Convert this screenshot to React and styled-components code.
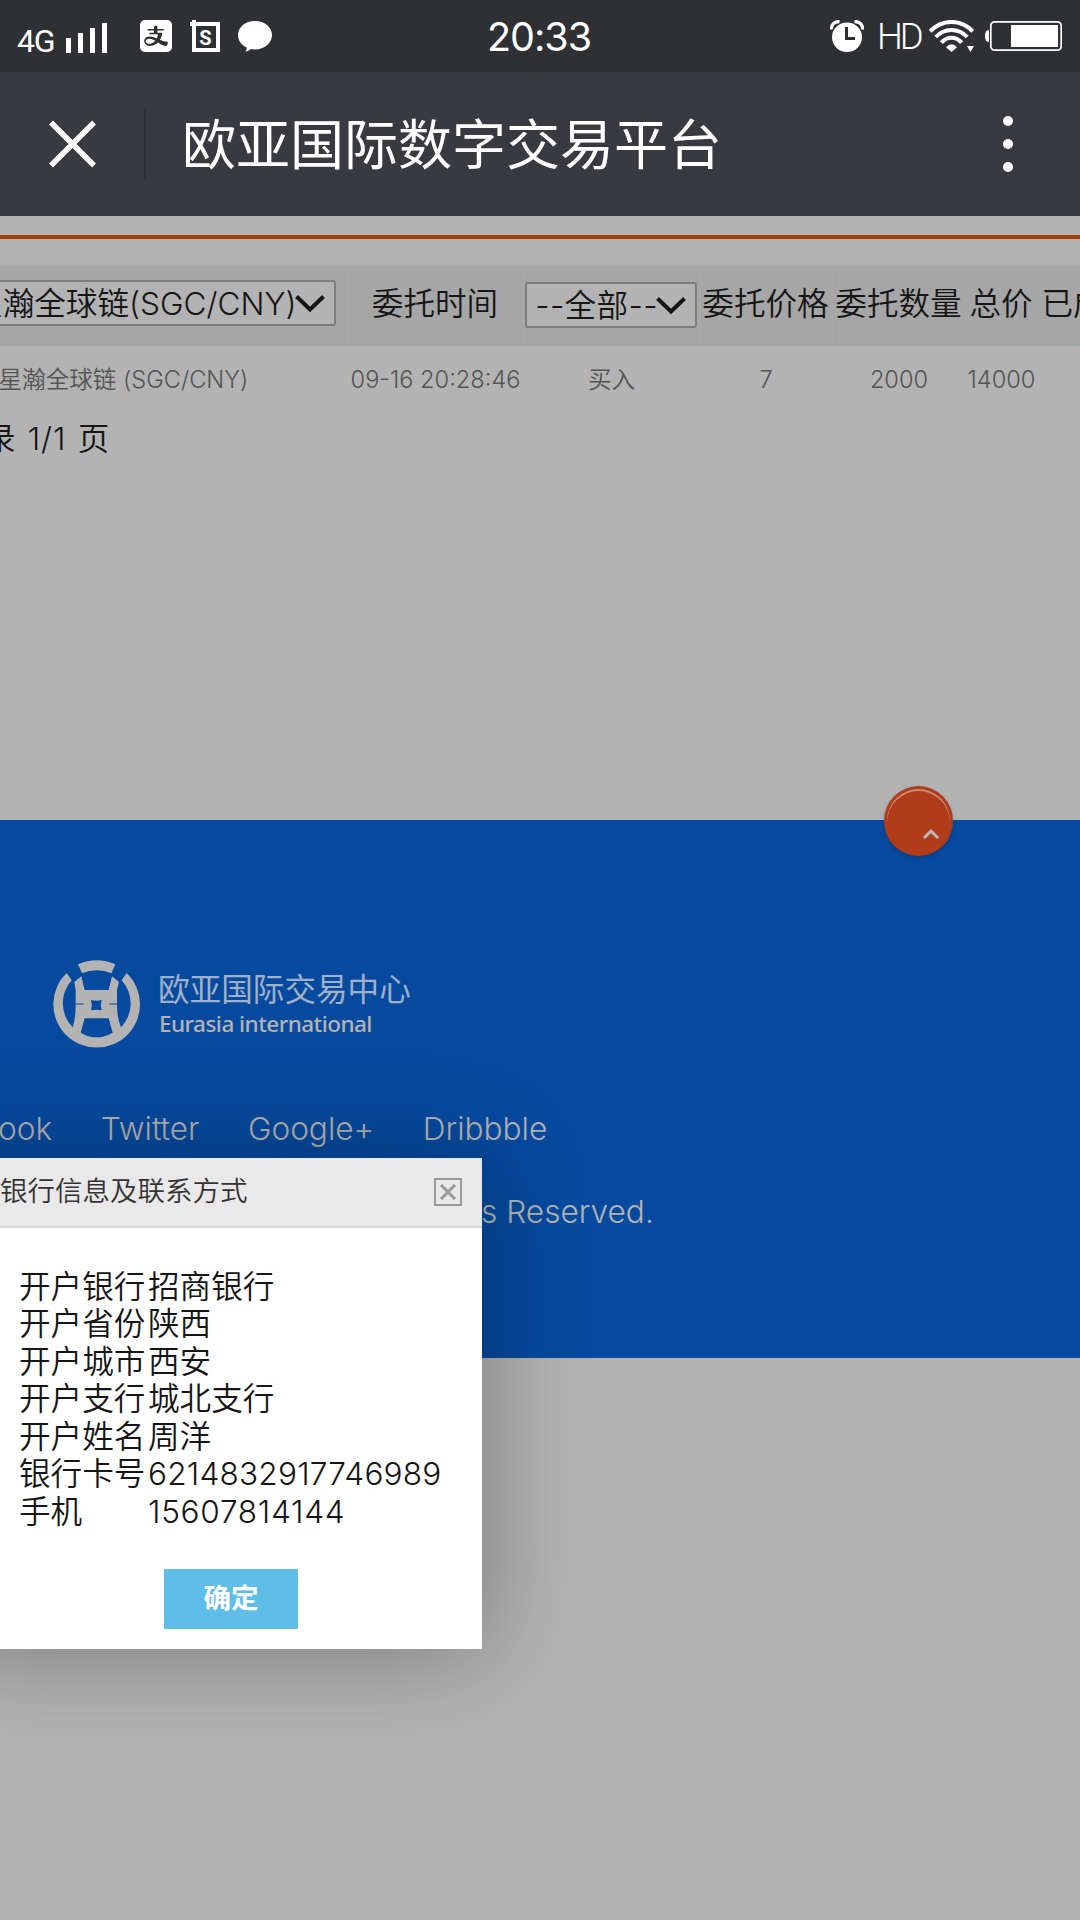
import React from "react";
import styled, { createGlobalStyle } from "styled-components";
import { AiFillAlipaySquare } from "react-icons/ai";

const GlobalStyle = createGlobalStyle`
  * { box-sizing: border-box; }
  html, body { margin: 0; padding: 0; background: #b3b3b3; }
  body {
    font-family: Inter, "Noto Sans CJK SC", sans-serif;
    font-weight: 350;
    color: #151515;
    overflow: hidden;
  }
`;

const Screen = styled.div`
  position: relative;
  width: 1080px;
  height: 1920px;
  overflow: hidden;
  background: #b3b3b3;
`;

const StatusBar = styled.div`
  display: grid;
  grid-template-columns: 1fr auto 1fr;
  height: 72px;
  padding: 0 18px;
  background: #2f3034;
  color: #fff;
`;

const StatusGroup = styled.div`
  display: flex;
  align-items: flex-start;
  justify-content: ${(p) => (p.$end ? "flex-end" : "flex-start")};
  padding-top: 20px;
`;

const Network = styled.span`
  width: 39px;
  margin: 2px 10px 0 -1px;
  font: 400 32px/38px Roboto, sans-serif;
  letter-spacing: -1.2px;
`;

const Signal = styled.div`
  display: flex;
  align-items: flex-end;
  gap: 7px;
  height: 33px;
  margin-right: 33px;
`;

const SignalBar = styled.i`
  width: 5px;
  height: ${(p) => p.$h}px;
  background: #fff;
`;

const NoticeIcons = styled.div`
  display: flex;
  gap: 18px;
`;

const PayBox = styled.div`
  display: flex;
  align-items: center;
  justify-content: center;
  width: 32px;
  height: 32px;
  border-radius: 5px;
  overflow: hidden;
  svg { flex: none; }
`;

const Clock = styled.div`
  padding: 18px 2px 0 0;
  font-weight: 400;
  font-size: 39.5px;
  line-height: 39px;
  letter-spacing: -1px;
  white-space: nowrap;
`;

const HD = styled.span`
  width: 46px;
  margin: -3px 6px 0 13px;
  font: 300 36.5px/40px Roboto, sans-serif;
  letter-spacing: -3px;
`;

const NavBar = styled.div`
  display: flex;
  align-items: center;
  height: 144px;
  padding: 0 67px 0 49px;
  background: #393a3f;
  color: #fff;
`;

const NavDivider = styled.i`
  width: 2px;
  height: 72px;
  margin: 0 36px 0 48px;
  background: #2e2f33;
`;

const NavTitle = styled.h1`
  flex: 1;
  margin: 0;
  padding-top: 4px;
  font-size: 54px;
  font-weight: 400;
  line-height: 72px;
`;

const Dots = styled.div`
  display: flex;
  flex-direction: column;
  gap: 13px;
`;

const Dot = styled.i`
  width: 10px;
  height: 10px;
  border-radius: 50%;
  background: #fff;
`;

const Rule = styled.div`
  height: 4px;
  margin: 19px 0 25px;
  background: #a33f00;
`;

const Row = styled.div`
  display: grid;
  grid-template-columns: 387px 176px 176px 133px 133px 72px 200px;
  width: 1277px;
  margin-left: -39.5px;
`;

const HeadRow = styled(Row)`
  height: 82px;
  background: #a6a6a6;
  border-top: 1px solid #adadad;
  border-bottom: 2px solid #9ea4a8;
`;

const HeadCell = styled.div`
  display: flex;
  justify-content: ${(p) => p.$align || "center"};
  padding-top: ${(p) => p.$top || 20}px;
  padding-right: ${(p) => p.$right || 0}px;
  padding-left: ${(p) => p.$left || 0}px;
  border-right: 1px solid #a9a9a9;
  font-size: 31.6px;
  line-height: 38px;
  white-space: nowrap;
`;

const Select = styled.div`
  display: flex;
  justify-content: flex-end;
  width: ${(p) => p.$w}px;
  height: 46px;
  padding: 3px 9px 0 0;
  border: 2px solid #7d7d7d;
  border-radius: 3px;
  background: #b3b3b3;
  font-size: 31.6px;
  line-height: 38px;
  svg { flex: none; margin: 9px 0 0 -2px; }
`;

const SelectText = styled.span`
  letter-spacing: ${(p) => p.$ls || 0}px;
`;

const DataRow = styled(Row)`
  height: 64px;
  padding-top: 2px;
  color: #545454;
  font-size: 23.6px;
  line-height: 64px;
`;

const Cell = styled.div`
  padding-left: ${(p) => p.$left || 0}px;
  text-align: ${(p) => p.$align || "center"};
  white-space: nowrap;
`;

const Pager = styled.div`
  height: 410px;
  margin-left: -16px;
  padding-top: 9px;
  font-size: 31.6px;
  line-height: 40px;
  letter-spacing: 1px;
  word-spacing: 1.2px;
`;

const Footer = styled.footer`
  height: 538px;
  padding-top: 140px;
  background: #064a9f;
  color: #b3b3b3;
`;

const Brand = styled.div`
  display: flex;
  height: 88px;
  margin-left: 53px;
`;

const BrandText = styled.div`
  display: flex;
  flex-direction: column;
  margin-left: 17px;
  padding-top: 10px;
`;

const BrandName = styled.span`
  font-size: 31.6px;
  font-weight: 400;
  line-height: 39px;
  color: #9fb0c8;
`;

const BrandSub = styled.span`
  font: 500 22.5px/30px "Noto Sans", sans-serif;
  letter-spacing: -0.53px;
  padding-left: 1px;
`;

const Links = styled.div`
  display: flex;
  gap: 48.5px;
  margin: 61px 0 0 -2px;
  font-size: 31.6px;
  line-height: 40px;
`;

const Copyright = styled.div`
  margin-top: 43px;
  padding-left: 481px;
  font-size: 31.6px;
  line-height: 40px;
`;

const BackTop = styled.button`
  position: absolute;
  left: 883.5px;
  top: 786px;
  width: 69px;
  height: 70px;
  padding: 3px;
  border: 0;
  border-radius: 50%;
  background: #b13c1a;
  box-shadow: 0 2px 4px rgba(0, 0, 0, 0.18);
`;

const BackTopInner = styled.span`
  display: flex;
  justify-content: flex-end;
  align-items: flex-end;
  width: 100%;
  height: 100%;
  padding: 0 10px 13px 0;
  border-radius: 50%;
  box-shadow: inset 0 2px 0 0 #cc8a78;
`;

const Dialog = styled.section`
  position: absolute;
  left: -60px;
  top: 1158px;
  width: 542px;
  height: 491px;
  background: #fff;
  box-shadow: 2px 2px 98px rgba(0, 0, 0, 0.32);
`;

const DialogHead = styled.header`
  display: flex;
  justify-content: space-between;
  align-items: flex-start;
  height: 70px;
  padding: 14px 20px 0 60px;
  border-bottom: 2px solid #d9d9d9;
  background: #e9e9e9;
  color: #333;
  font-size: 27.5px;
  line-height: 38px;
`;

const CloseBox = styled.button`
  display: flex;
  align-items: center;
  justify-content: center;
  width: 28px;
  height: 28px;
  margin-top: 6px;
  padding: 0;
  border: 2px solid #999;
  background: transparent;
`;

const Details = styled.dl`
  display: grid;
  grid-template-columns: 129px 1fr;
  grid-auto-rows: 37.5px;
  margin: 39.5px 0 0 79px;
  font-size: 31.6px;
  line-height: 37.5px;
  dt, dd { margin: 0; white-space: nowrap; }
`;

const Digits = styled.span`
  letter-spacing: ${(p) => p.$ls}px;
`;

const Confirm = styled.button`
  display: block;
  width: 134px;
  height: 60px;
  margin: 39px 0 0 224px;
  padding: 0 0 6px;
  border: 0;
  background: #5fbee7;
  color: #fff;
  font: 700 27.5px/54px "Noto Sans CJK SC", sans-serif;
`;

const Chevron = () => (
  <svg width="30" height="19" viewBox="0 0 30 19" fill="none" stroke="#151515" strokeWidth="4">
    <path d="M1.5 2.5 15 15.5 28.5 2.5" />
  </svg>
);

const ScreenshotIcon = () => (
  <svg width="30" height="32" viewBox="0 0 30 32" fill="none" stroke="#fff">
    <path d="M4 0V30H28V4H0" strokeWidth="4" />
    <text x="15.5" y="24.5" textAnchor="middle" fontFamily="Roboto" fontWeight="700" fontSize="20" fill="#fff" stroke="none">S</text>
  </svg>
);

const BubbleIcon = () => (
  <svg width="34" height="32" viewBox="0 0 34 32" fill="#fff">
    <path d="M17 1C26.500 1 34 7.200 34 15S26.500 29.500 17 29.500C15.500 29.500 14 29.400 12.700 29.100 11.500 30.300 9.500 31.500 7.200 31.800 8.500 30.300 8.800 28.800 8.600 27.500 3.500 25 0 20.500 0 15 0 7.200 7.500 1 17 1Z" />
  </svg>
);

const AlarmIcon = () => (
  <svg width="34" height="32" viewBox="0 0 34 32" fill="none">
    <ellipse cx="17" cy="17.200" rx="15" ry="14.800" fill="#fff" />
    <path d="M16.500 7V18.500H25" stroke="#2f3034" strokeWidth="3" />
    <path d="M1.500 9.500C1 5 4.500 1.200 9.500 1.600M32.500 9.500C33 5 29.500 1.200 24.500 1.600" stroke="#fff" strokeWidth="3.200" />
  </svg>
);

const WifiIcon = () => (
  <svg width="46" height="32" viewBox="0 0 46 32" fill="none" stroke="#fff" strokeWidth="4">
    <path d="M1.200 11.300C13-1.200 32-1.200 43.800 11.300" />
    <path d="M6.800 17C15.500 7.500 29.500 7.500 38.200 17" />
    <path d="M12.300 22.600C18 16 27 16 32.700 22.600" />
    <path d="M17 27.200Q22.500 21.200 28 27.200L22.500 32Z" fill="#fff" stroke="none" />
    <path d="M38 26H45L41.500 32Z" fill="#fff" stroke="none" />
  </svg>
);

const BatteryIcon = styled.svg`
  margin-left: 9px;
`;

const LogoMark = () => (
  <svg width="88" height="88" viewBox="39 31 264 264">
    <g fill="#b3b3b3">
      <path d="M114 44Q170 20 226 44L214 71Q170 52 126 71Z" />
      <path d="M80 70A130 130 0 1 0 260 70L245 92A101 102 0 0 1 243 233Q231 205 231 165V122L237 97 216 80 206 121H134L124 80 103 97 107 122V165Q107 205 98 233A101 102 0 0 1 95 92ZM134 206H206L218 249Q170 277 122 249Z" fillRule="evenodd" />
    </g>
    <path d="M153 151Q169 156 185 151 180 166 185 182 169 178 153 182 158 166 153 151Z" fill="#064a9f" />
    <path d="M107 161H131V165.500H107ZM208 161H231V165.500H208Z" fill="#064a9f" opacity="0.7" />
  </svg>
);

const details = [
  ["开户银行", "招商银行"],
  ["开户省份", "陕西"],
  ["开户城市", "西安"],
  ["开户支行", "城北支行"],
  ["开户姓名", "周洋"],
  ["银行卡号", "6214832917746989", 0.2],
  ["手机", "15607814144", 0.7],
];

export default function App() {
  return (
    <Screen>
      <GlobalStyle />
      <StatusBar>
        <StatusGroup>
          <Network>4G</Network>
          <Signal>
            {[15, 20, 25, 30].map((h) => <SignalBar key={h} $h={h} />)}
          </Signal>
          <NoticeIcons>
            <PayBox><AiFillAlipaySquare size={42} /></PayBox>
            <ScreenshotIcon />
            <BubbleIcon />
          </NoticeIcons>
        </StatusGroup>
        <Clock>20:33</Clock>
        <StatusGroup $end>
          <AlarmIcon />
          <HD>HD</HD>
          <WifiIcon />
          <BatteryIcon width="78" height="32" viewBox="0 0 78 32" fill="none">
            <path d="M5 10V22C2 22 1 19 1 16S2 10 5 10Z" fill="#fff" />
            <rect x="6.800" y="1.800" width="70.400" height="28.400" rx="4" stroke="#fff" strokeWidth="1.700" />
            <rect x="27" y="5" width="47" height="22" fill="#fff" />
          </BatteryIcon>
        </StatusGroup>
      </StatusBar>

      <NavBar>
        <svg width="47" height="48" viewBox="0 0 47 48" stroke="#fff" strokeWidth="5.500">
          <path d="M2 2.500 45 45.500M45 2.500 2 45.500" />
        </svg>
        <NavDivider />
        <NavTitle>欧亚国际数字交易平台</NavTitle>
        <Dots><Dot /><Dot /><Dot /></Dots>
      </NavBar>

      <Rule />
      <HeadRow>
        <HeadCell $align="flex-end" $right={11} $top={15}>
          <Select $w={376}>
            <SelectText>星瀚全球链(SGC/CNY)</SelectText>
            <Chevron />
          </Select>
        </HeadCell>
        <HeadCell>委托时间</HeadCell>
        <HeadCell $top={17}>
          <Select $w={172}>
            <SelectText $ls={0.4}>--全部--</SelectText>
            <Chevron />
          </Select>
        </HeadCell>
        <HeadCell>委托价格</HeadCell>
        <HeadCell>委托数量</HeadCell>
        <HeadCell>总价</HeadCell>
        <HeadCell $align="flex-start" $left={4}>已成</HeadCell>
      </HeadRow>
      <DataRow>
        <Cell $align="left" $left={38}>星瀚全球链 (SGC/CNY)</Cell>
        <Cell>09-16 20:28:46</Cell>
        <Cell>买入</Cell>
        <Cell>7</Cell>
        <Cell>2000</Cell>
        <Cell>14000</Cell>
      </DataRow>
      <Pager>录 1/1 页</Pager>

      <Footer>
        <Brand>
          <LogoMark />
          <BrandText>
            <BrandName>欧亚国际交易中心</BrandName>
            <BrandSub>Eurasia international</BrandSub>
          </BrandText>
        </Brand>
        <Links>
          <span>ook</span>
          <span>Twitter</span>
          <span>Google+</span>
          <span>Dribbble</span>
        </Links>
        <Copyright>s Reserved.</Copyright>
      </Footer>

      <BackTop>
        <BackTopInner>
          <svg width="18" height="12" viewBox="0 0 18 12" fill="none" stroke="#b9b9b9" strokeWidth="3">
            <path d="M2 10 9 3 16 10" />
          </svg>
        </BackTopInner>
      </BackTop>

      <Dialog>
        <DialogHead>
          <span>银行信息及联系方式</span>
          <CloseBox>
            <svg width="16" height="16" viewBox="0 0 16 16" stroke="#999" strokeWidth="3">
              <path d="M1 1 15 15M15 1 1 15" />
            </svg>
          </CloseBox>
        </DialogHead>
        <Details>
          {details.map(([label, value, ls]) => (
            <React.Fragment key={label}>
              <dt>{label}</dt>
              <dd>{ls ? <Digits $ls={ls}>{value}</Digits> : value}</dd>
            </React.Fragment>
          ))}
        </Details>
        <Confirm>确定</Confirm>
      </Dialog>
    </Screen>
  );
}
